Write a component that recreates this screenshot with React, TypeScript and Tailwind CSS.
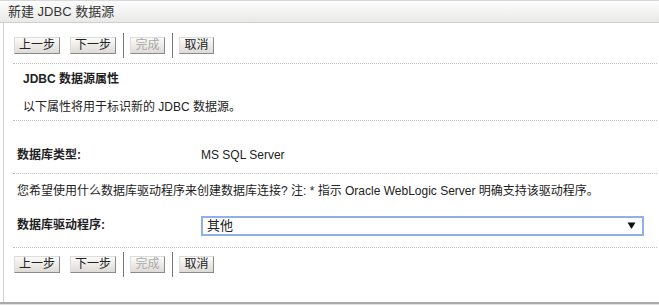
const font = {
  fontFamily: '"Liberation Sans", "Noto Sans CJK SC", sans-serif',
};

const btnBase =
  "h-[17px] text-[12px] leading-[15px] border border-t-[#dcdcdc] border-l-[#dcdcdc] border-r-[#8a8a8a] border-b-[#8a8a8a] bg-gradient-to-b from-[#fbfbfa] to-[#dedbd6]";

function Btn({ label, disabled, wide }: { label: string; disabled?: boolean; wide?: boolean }) {
  return (
    <button
      className={
        btnBase +
        (disabled ? " text-[#a9a9a9]" : " text-[#222]") +
        (wide ? " w-[46px]" : " w-[35px]")
      }
    >
      {label}
    </button>
  );
}

function Sep() {
  return <div className="w-px h-[25px] bg-[#777]" />;
}

function Toolbar() {
  return (
    <div className="flex items-center h-[25px] ml-px">
      <Btn label="上一步" wide />
      <div className="w-[10px]" />
      <Btn label="下一步" wide />
      <div className="w-[7px]" />
      <Sep />
      <div className="w-[6px]" />
      <Btn label="完成" disabled />
      <div className="w-[7px]" />
      <Sep />
      <div className="w-[6px]" />
      <Btn label="取消" />
    </div>
  );
}

export default function App() {
  return (
    <div className="w-[659px] h-[307px] bg-white text-[#222] text-[12px]" style={font}>
      <div className="h-[23px] border-t border-b border-t-[#d8d8d8] border-b-[#cfcfcf] bg-gradient-to-b from-[#fdfdfd] to-[#e9e9e7] pl-[8px] text-[13px] leading-[21px] text-[#333]">
        新建 JDBC 数据源
      </div>

      <div className="ml-[3px] h-[279px] border-l border-[#cfcfcf] pl-[9px] pr-[2px]">
        <div className="h-[41px] pt-[10px] border-b border-dotted border-[#bdbdbd]">
          <Toolbar />
        </div>

        <div className="h-[57px] pl-[10px] border-b border-dotted border-[#bdbdbd]">
          <div className="h-[30px] flex items-center font-bold">JDBC 数据源属性</div>
          <div className="h-[26px] flex items-center">以下属性将用于标识新的 JDBC 数据源。</div>
        </div>

        <div className="h-[53px] pt-[24px] pl-[4px] border-b border-dotted border-[#bdbdbd]">
          <div className="h-[20px] flex items-center">
            <div className="w-[184px] font-bold">数据库类型:</div>
            <div>MS SQL Server</div>
          </div>
        </div>

        <div className="h-[74px] pt-[7px] pl-[4px] border-b border-dotted border-[#bdbdbd]">
          <div className="h-[20px] flex items-center">
            您希望使用什么数据库驱动程序来创建数据库连接? 注: * 指示 Oracle WebLogic Server 明确支持该驱动程序。
          </div>
          <div className="mt-[14px] h-[21px] flex items-center">
            <div className="w-[184px] font-bold -mt-[2px]">数据库驱动程序:</div>
            <div className="w-[443px] h-[20px] border-2 border-[#8fb0e8] flex items-center justify-between pl-[4px] pr-[6px] text-[13px]">
              <span>其他</span>
              <svg width="9" height="9" viewBox="0 0 9 9" className="shrink-0">
                <path d="M0.5 1.5h8L4.5 8z" fill="#111" />
              </svg>
            </div>
          </div>
        </div>

        <div className="pt-[4px]">
          <Toolbar />
        </div>
      </div>
      <div className="h-[2px] bg-[#a9a9a9]" />
      <div className="h-[1px] bg-[#dedede]" />
    </div>
  );
}
